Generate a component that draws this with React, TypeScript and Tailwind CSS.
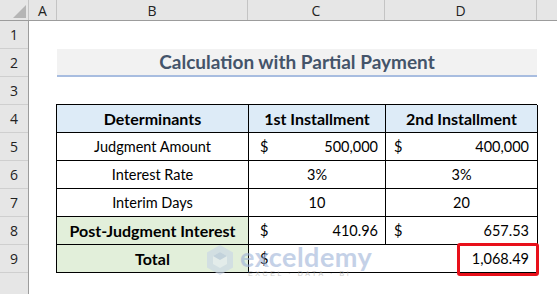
import React from "react";

const ROWS = [1, 2, 3, 4, 5, 6, 7, 8, 9, 10];

function Corner() {
  return (
    <div className="relative h-full w-[29px] border-r border-[#c4c4c4]">
      <svg className="absolute left-0 top-0" width="29" height="21" viewBox="0 0 29 21">
        <polygon points="26,5 26,18 13,18" fill="#b5b5b5" />
      </svg>
    </div>
  );
}

function Watermark() {
  return (
    <div className="pointer-events-none absolute left-[206px] top-[244px] flex items-start gap-[6px] opacity-60">
      <svg width="28" height="32" viewBox="0 0 28 32">
        <polygon points="14,1 27,8.5 27,23.5 14,31 1,23.5 1,8.5" fill="#c9d5e8" />
        <polygon points="14,8 21,12 21,20 14,24 7,20 7,12" fill="#e4ebf5" />
        <polygon points="14,8 21,12 14,16 7,12" fill="#aebfdc" />
      </svg>
      <div className="flex flex-col">
        <span className="text-[27px] font-bold leading-[26px] tracking-[0.5px] text-[#9db3d8] [font-family:Lato,sans-serif]">
          exceldemy
        </span>
        <span className="pl-[8px] text-[7px] leading-[8px] tracking-[2.6px] text-[#a8a8a8] [font-family:'Liberation_Sans',sans-serif]">
          EXCEL · DATA · BI
        </span>
      </div>
    </div>
  );
}

export default function App() {
  const cell = "flex h-[28px] items-center border-r border-b border-black text-[14.5px] text-black";
  const bold = "font-bold text-[16px]";
  return (
    <div className="relative h-[294px] w-[557px] overflow-hidden bg-white [font-family:Lato,'Liberation_Sans',sans-serif]">
      {/* column headers */}
      <div className="flex h-[21px] border-b border-[#9c9c9c] bg-[#e6e6e6] text-[14px] text-[#222] [font-family:'Open_Sans',sans-serif]">
        <Corner />
        <div className="flex w-[28px] items-center justify-center border-r border-[#c4c4c4]">A</div>
        <div className="flex w-[191px] items-center justify-center border-r border-[#c4c4c4]">B</div>
        <div className="flex w-[137px] items-center justify-center border-r border-[#c4c4c4]">C</div>
        <div className="flex w-[152px] items-center justify-center border-r border-[#c4c4c4]">D</div>
        <div className="flex-1" />
      </div>

      <div className="flex">
        {/* row numbers */}
        <div className="flex w-[29px] flex-col border-r border-[#9c9c9c] bg-[#e6e6e6] text-[14px] text-[#222] [font-family:'Open_Sans',sans-serif]">
          {ROWS.map((r) => (
            <div key={r} className="flex h-[28px] items-center justify-center border-b border-[#cfcfcf]">
              {r < 10 ? r : ""}
            </div>
          ))}
        </div>

        {/* sheet */}
        <div className="flex flex-1 flex-col">
          <div className="h-[28px]" />
          <div className="ml-[28px] flex h-[28px] w-[480px] items-center justify-center border-b-2 border-[#a8bde0] bg-[#f2f2f2] text-[19px] font-bold text-[#44546a]">
            Calculation with Partial Payment
          </div>
          <div className="h-[27px]" />

          <div className="ml-[27px] grid w-[481px] grid-cols-[192px_137px_152px] border-l border-t border-black">
            <div className={`${cell} ${bold} justify-center bg-[#ddebf7]`}>Determinants</div>
            <div className={`${cell} ${bold} justify-center bg-[#ddebf7]`}>1st Installment</div>
            <div className={`${cell} ${bold} justify-center bg-[#ddebf7]`}>2nd Installment</div>

            <div className={`${cell} justify-center`}>Judgment Amount</div>
            <div className={`${cell} justify-between pl-[11px] pr-[7px]`}>
              <span>$</span>
              <span>500,000</span>
            </div>
            <div className={`${cell} justify-between pl-[8px] pr-[8px]`}>
              <span>$</span>
              <span>400,000</span>
            </div>

            <div className={`${cell} justify-center`}>Interest Rate</div>
            <div className={`${cell} justify-center`}>3%</div>
            <div className={`${cell} justify-center`}>3%</div>

            <div className={`${cell} justify-center`}>Interim Days</div>
            <div className={`${cell} justify-center`}>10</div>
            <div className={`${cell} justify-center`}>20</div>

            <div className={`${cell} ${bold} justify-center bg-[#e2efda]`}>Post-Judgment Interest</div>
            <div className={`${cell} justify-between pl-[11px] pr-[7px]`}>
              <span>$</span>
              <span>410.96</span>
            </div>
            <div className={`${cell} justify-between pl-[8px] pr-[8px]`}>
              <span>$</span>
              <span>657.53</span>
            </div>

            <div className={`${cell} ${bold} justify-center bg-[#e2efda]`}>Total</div>
            <div className={`${cell} relative col-span-2 justify-between pl-[11px] pr-[8px]`}>
              <span>$</span>
              <span>1,068.49</span>
              <div className="absolute right-[-2px] top-[-2px] h-[33px] w-[82px] rounded-[3px] border-[3px] border-[#e8101a]" />
            </div>
          </div>
        </div>
      </div>

      <Watermark />
    </div>
  );
}
